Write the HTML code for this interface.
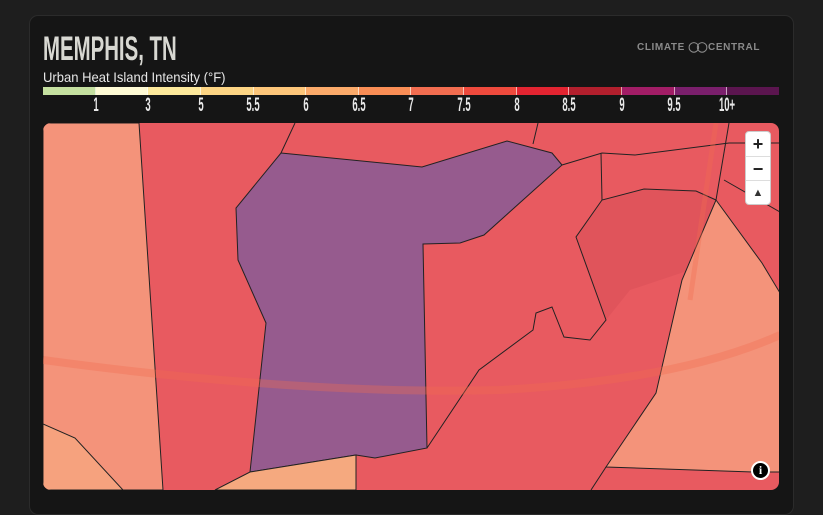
<!DOCTYPE html>
<html><head><meta charset="utf-8"><style>
*{margin:0;padding:0;box-sizing:border-box}
body{width:823px;height:500px;background:#1e1e1e;overflow:hidden;font-family:"Liberation Sans",sans-serif;position:relative}
.card{position:absolute;left:29px;top:15px;width:765px;height:500px;background:#151515;border:1px solid #2b2b2b;border-radius:9px}
.title{position:absolute;left:43px;top:32px;font-size:34px;font-weight:bold;color:#d8d8d2;transform:scaleX(0.6);transform-origin:left top;line-height:34px}
.sub{position:absolute;left:43px;top:69px;font-size:14px;color:#e6e6e6;transform:scaleX(0.93);transform-origin:left top}
.logo{position:absolute;left:637px;top:42px;font-size:10px;font-weight:bold;color:#8a8a8a;letter-spacing:0.6px;white-space:nowrap}
.bar{position:absolute;left:43px;top:87px;width:736px;height:8px;display:flex}
.bar div{flex:1;border-right:1px solid rgba(255,255,255,.6)}
.bar div:last-child{border:none}
.lab{position:absolute;top:96px;font-size:19px;font-weight:bold;color:#e8e8e8;transform:translateX(-50%) scaleX(0.5);line-height:20px}
.map{position:absolute;left:43px;top:123px;width:736px;height:367px;border-radius:8px;overflow:hidden}
.zb{position:absolute;left:745px;top:131px;width:26px;height:74px;background:#fff;border-radius:4px;border:1px solid #ccc}
.zb div{height:24.5px;border-bottom:1px solid #ddd;text-align:center;font-size:18px;font-weight:bold;line-height:24px;color:#222}
.info{position:absolute;left:751px;top:461px;width:19px;height:19px;border-radius:50%;background:#000;border:2px solid #fff;color:#fff;font-size:12px;font-weight:bold;text-align:center;line-height:15px;font-family:"Liberation Serif",serif}
</style></head><body>
<div class="card"></div>
<div class="title">MEMPHIS, TN</div>
<div class="logo">CLIMATE <span style="letter-spacing:-3px">◯◯</span> CENTRAL</div>
<div class="sub">Urban Heat Island Intensity (°F)</div>
<div class="bar">
<div style="background:#c5e0a0"></div><div style="background:#fffbd5"></div><div style="background:#fde99b"></div><div style="background:#fdd584"></div><div style="background:#fdc67a"></div><div style="background:#fbaa6a"></div><div style="background:#f98d55"></div><div style="background:#f26d50"></div><div style="background:#ef4a3d"></div><div style="background:#e32431"></div><div style="background:#b21f2d"></div><div style="background:#a21d66"></div><div style="background:#7a1f6c"></div><div style="background:#5b154f"></div>
</div>
<div class="lab" style="left:96px">1</div><div class="lab" style="left:148px">3</div><div class="lab" style="left:201px">5</div><div class="lab" style="left:253px">5.5</div><div class="lab" style="left:306px">6</div><div class="lab" style="left:359px">6.5</div><div class="lab" style="left:411px">7</div><div class="lab" style="left:464px">7.5</div><div class="lab" style="left:517px">8</div><div class="lab" style="left:569px">8.5</div><div class="lab" style="left:622px">9</div><div class="lab" style="left:674px">9.5</div><div class="lab" style="left:727px">10+</div>
<div class="map">
<svg width="736" height="367" viewBox="43 123 736 367" style="display:block">
<rect x="43" y="123" width="736" height="367" fill="#e85a60"/>
<polygon points="43,123 139,123 163,490 43,490" fill="#f4937a" stroke="#222" stroke-width="1"/>
<polygon points="43,424 75,438 123,490 43,490" fill="#f6a27e" stroke="#222" stroke-width="1"/>
<polygon points="602,200 644,189 696,191 716,200 690,270 630,290 606,320 576,237" fill="#e0545b"/>
<polyline points="716,200 696,191 644,189 602,200 576,237 606,320 590,340 564,337 552,307 536,313 533,330 479,370 427,448" fill="none" stroke="#222"/>
<polygon points="716,200 762,263 780,293 780,472 753,472 606,467 656,393 682,280" fill="#f4937a" stroke="#222" stroke-width="1"/>
<polygon points="281,153 422,167 507,141 552,153 562,165 484,235 460,243 423,244 427,448 375,458 356,455 250,472 266,323 238,260 236,208" fill="#965b8e" stroke="#222" stroke-width="1"/>
<polygon points="250,472 356,455 356,490 215,490" fill="#f5a97f" stroke="#222" stroke-width="1"/>
<polyline points="295,123 281,153" fill="none" stroke="#222"/>
<polyline points="538,123 533,144" fill="none" stroke="#222"/>
<polyline points="562,165 602,153 635,155 729,143 780,143" fill="none" stroke="#222"/>
<polyline points="601,153 602,200" fill="none" stroke="#222"/>
<polyline points="729,123 716,200" fill="none" stroke="#222"/>
<polyline points="724,180 780,212" fill="none" stroke="#222"/>
<polyline points="606,467 591,490" fill="none" stroke="#222"/>
<path d="M43,360 Q300,395 500,390 Q680,380 780,335" fill="none" stroke="#f26d50" stroke-width="8" opacity=".35"/>
<path d="M716,123 L690,300" fill="none" stroke="#f26d50" stroke-width="5" opacity=".35"/>
</svg>
</div>
<div class="zb"><div>+</div><div>−</div><div style="border:none;font-size:11px;color:#333">▲</div></div>
<div class="info">i</div>
</body></html>
